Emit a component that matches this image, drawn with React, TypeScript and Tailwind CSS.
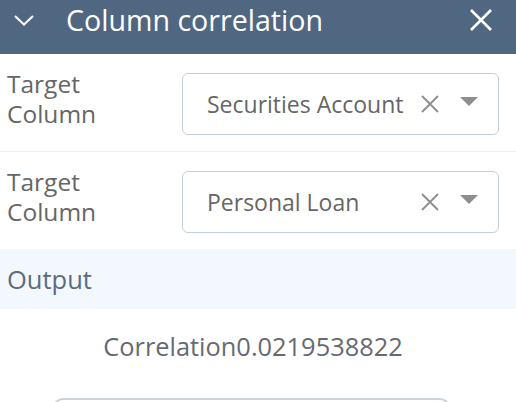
const font = { fontFamily: '"Open Sans", "Noto Sans", sans-serif' };

const SelectBox = ({ value }: { value: string }) => (
  <div className="flex items-center h-[62px] w-[317px] rounded-[6px] border-[1.5px] border-[#c5cfdc] pl-[24px] pr-[20px]">
    <span className="flex-1 text-[23px] text-[#666666] whitespace-nowrap">{value}</span>
    <svg width="18" height="18" viewBox="0 0 18 18" className="ml-[10px]">
      <path d="M1 1L17 17M17 1L1 17" stroke="#8c8c8c" strokeWidth="1.8" />
    </svg>
    <svg width="18" height="10" viewBox="0 0 18 10" className="ml-[21px] -mt-[4px]">
      <path d="M0 0H18L9 9Z" fill="#8e8e8e" />
    </svg>
  </div>
);

const Row = ({ value, border }: { value: string; border?: boolean }) => (
  <div
    className={`flex items-start h-[98px] pt-[15px] ${
      border ? "border-b border-[#f0f0f0]" : ""
    }`}
  >
    <div className="w-[182px] pl-[7px] text-[24.5px] leading-[30px] text-[#666666]">
      <div>Target</div>
      <div>Column</div>
    </div>
    <div className="mt-[4px]">
      <SelectBox value={value} />
    </div>
  </div>
);

export default function App() {
  return (
    <div className="h-screen overflow-hidden bg-white" style={font}>
      <div className="h-[54px] bg-[#506782]">
        <div className="flex items-center h-[40px] pl-[14px] pr-[24px]">
          <svg width="20" height="11" viewBox="0 0 20 11">
            <path d="M1 1L10 9.5L19 1" stroke="white" strokeWidth="2" fill="none" />
          </svg>
          <span className="ml-[32px] flex-1 text-[28.6px] text-white whitespace-nowrap">
            Column correlation
          </span>
          <svg width="22" height="22" viewBox="0 0 22 22">
            <path d="M1 1L21 21M21 1L1 21" stroke="white" strokeWidth="2.6" />
          </svg>
        </div>
      </div>
      <Row value="Securities Account" border />
      <Row value="Personal Loan" />
      <div className="flex items-center h-[60px] -mt-[1px] px-[7px] bg-[#f3f8fe] text-[25.5px] text-[#5d6b7e]">
        Output
      </div>
      <div className="mt-[20px] pr-[10px] text-center text-[25.4px] leading-[34px] text-[#666a70]">
        Correlation0.0219538822
      </div>
      <div className="mt-[35px] ml-[53px] w-[397px] h-[50px] rounded-[10px] border-2 border-[#c8d3e0]" />
    </div>
  );
}
